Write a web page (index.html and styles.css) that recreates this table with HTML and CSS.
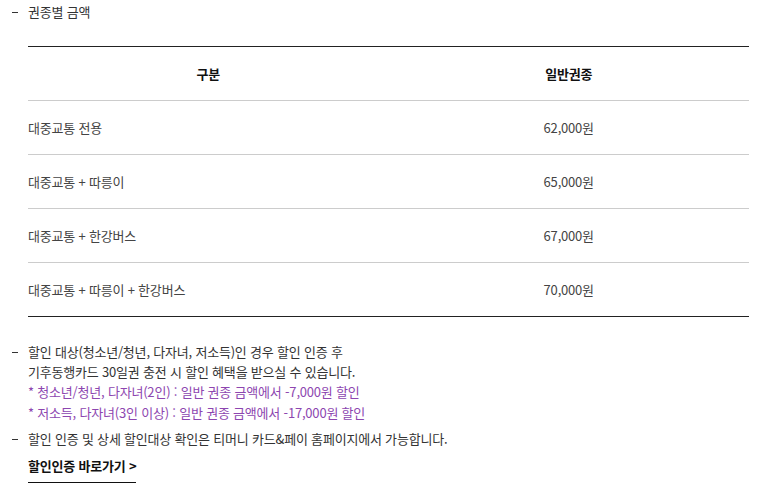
FILE: index.html
```html
<!DOCTYPE html>
<html lang="ko">
<head>
<meta charset="utf-8">
<link rel="stylesheet" href="styles.css">
</head>
<body>
<div class="page">
  <ul class="dash-list top">
    <li>권종별 금액</li>
  </ul>
  <table class="price">
    <thead>
      <tr><th>구분</th><th>일반권종</th></tr>
    </thead>
    <tbody>
      <tr><td>대중교통 전용</td><td>62,000원</td></tr>
      <tr><td>대중교통 + 따릉이</td><td>65,000원</td></tr>
      <tr><td>대중교통 + 한강버스</td><td>67,000원</td></tr>
      <tr><td>대중교통 + 따릉이 + 한강버스</td><td>70,000원</td></tr>
    </tbody>
  </table>
  <ul class="dash-list notes">
    <li>할인 대상(청소년/청년, 다자녀, 저소득)인 경우 할인 인증 후<br>기후동행카드 30일권 충전 시 할인 혜택을 받으실 수 있습니다.
      <p class="purple">* 청소년/청년, 다자녀(2인) : 일반 권종 금액에서 -7,000원 할인</p>
      <p class="purple">* 저소득, 다자녀(3인 이상) : 일반 권종 금액에서 -17,000원 할인</p>
    </li>
    <li>할인 인증 및 상세 할인대상 확인은 티머니 카드&amp;페이 홈페이지에서 가능합니다.</li>
  </ul>
  <a class="link" href="#">할인인증 바로가기 &gt;</a>
</div>
</body>
</html>
```
FILE: styles.css
```css
* { box-sizing: border-box; }
html, body { margin: 0; padding: 0; background: #fff; }
body {
  font-family: "Noto Sans CJK KR", "Noto Sans", sans-serif;
  font-size: 13px;
  letter-spacing: -0.2px;
  color: #333;
}
.page {
  padding: 2px 8px 0 28px;
  width: 757px;
}
.dash-list {
  list-style: none;
  margin: 0;
  padding: 0;
}
.dash-list li {
  position: relative;
  line-height: 20px;
}
.dash-list li::before {
  content: "";
  position: absolute;
  left: -16px;
  top: 10px;
  width: 6px;
  height: 1px;
  background: #333;
}
.price {
  width: 721px;
  table-layout: fixed;
  border-collapse: collapse;
  margin-top: 24px;
  border-top: 1px solid #222;
  border-bottom: 1px solid #222;
}
.price th, .price td {
  height: 54px;
  padding: 0;
  font-weight: normal;
  vertical-align: middle;
}
.price th {
  font-weight: bold;
  color: #111;
  text-align: center;
  width: 360px;
  border-bottom: 1px solid #ccc;
}
.price td { color: #444; }
.price td:last-child { text-align: center; }
.price tbody tr + tr td { border-top: 1px solid #ccc; }
.notes { margin-top: 25px; }
.notes li + li { margin-top: 6px; }
.purple {
  margin: 0;
  color: #8d46b0;
  line-height: 20px;
}
.notes .purple + .purple { margin-top: 1px; }
.link {
  display: inline-block;
  margin-top: 7px;
  font-weight: bold;
  color: #111;
  text-decoration: none;
  padding-bottom: 6px;
  border-bottom: 1px solid #111;
  line-height: 20px;
}
```
